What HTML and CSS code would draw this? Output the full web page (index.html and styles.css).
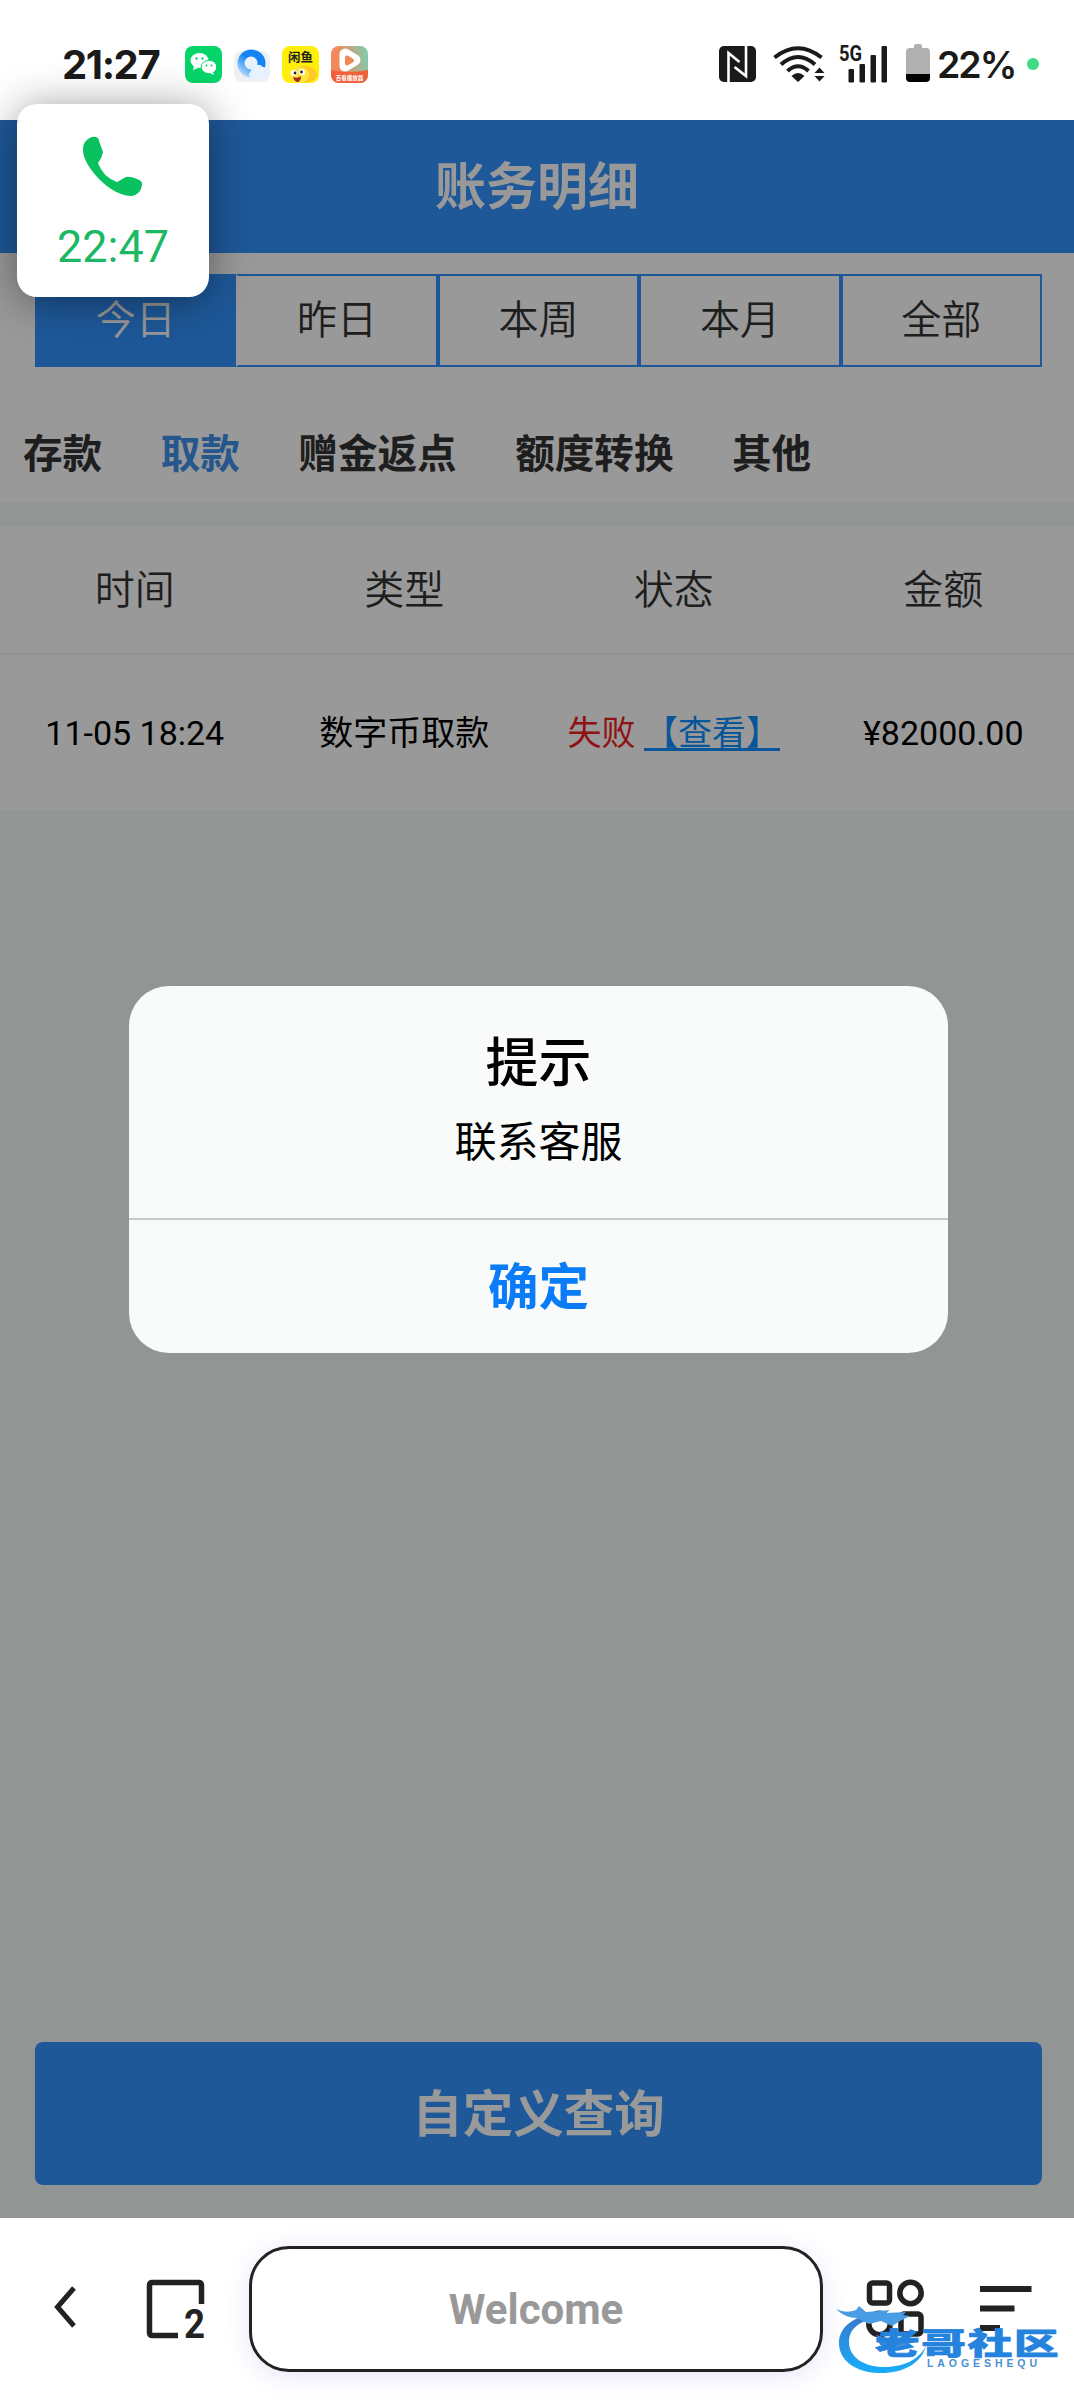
FILE: index.html
```html
<!DOCTYPE html>
<html lang="zh-CN">
<head>
    <meta charset="UTF-8">
    <meta name="viewport" content="width=device-width, initial-scale=1.0">
    <title>账务明细</title>
    <link rel="stylesheet" href="styles.css">
</head>
<body>
    <!-- Status bar -->
    <div class="status-bar">
        <span class="clock">21:27</span>
        <div class="app-icons">
            <svg width="37" height="37" viewBox="0 0 37 37">
                <rect width="37" height="37" rx="8" fill="#05d568"/>
                <ellipse cx="14.500" cy="14.500" rx="9" ry="7.500" fill="#fff"/>
                <path d="M9 20l-1 4 5-2z" fill="#fff"/>
                <circle cx="11.500" cy="12.500" r="1.200" fill="#05d568"/>
                <circle cx="17.500" cy="12.500" r="1.200" fill="#05d568"/>
                <ellipse cx="24" cy="21" rx="7.800" ry="6.800" fill="#fff" stroke="#05d568" stroke-width="1"/>
                <path d="M28 26l1 3-4-2z" fill="#fff"/>
                <circle cx="21.500" cy="19.500" r="1" fill="#05d568"/>
                <circle cx="26.500" cy="19.500" r="1" fill="#05d568"/>
            </svg>
            <svg width="37" height="37" viewBox="0 0 37 37">
                <defs>
                    <linearGradient id="ring" x1="0.800" y1="0.200" x2="0.200" y2="1">
                        <stop offset="0.350" stop-color="#1683f5"/>
                        <stop offset="1" stop-color="#c4e2fc"/>
                    </linearGradient>
                </defs>
                <rect y="5" width="36" height="31" rx="8" fill="#eef0f4"/>
                <circle cx="17.500" cy="17.500" r="14" fill="url(#ring)"/>
                <circle cx="17" cy="17" r="6.500" fill="#e9f2fc"/>
                <path d="M17 33a5 5 0 0 1 0-8 7 7 0 0 1 12-4c4 0 6 3 6 6s-2 6-6 6z" fill="#e6f2ff"/>
            </svg>
            <svg width="37" height="37" viewBox="0 0 37 37">
                <rect width="37" height="37" rx="8" fill="#ffee08"/>
                <ellipse cx="22" cy="28.500" rx="13" ry="8.500" fill="#ffc928"/>
                <ellipse cx="17" cy="29" rx="10" ry="8" fill="#ffe63d"/>
                <text class="fish-label" x="18.500" y="15.500" text-anchor="middle">闲鱼</text>
                <circle cx="12" cy="27" r="3" fill="#fff"/>
                <circle cx="20" cy="26" r="3" fill="#fff"/>
                <circle cx="13" cy="27" r="1.400" fill="#222"/>
                <circle cx="19.500" cy="26" r="1.400" fill="#222"/>
                <path d="M11 31q5 2 8-1 0 6-4 6-3-1-4-5z" fill="#a72a16"/>
            </svg>
            <svg width="37" height="37" viewBox="0 0 37 37">
                <defs>
                    <linearGradient id="play" x1="0" y1="0.300" x2="1" y2="0.100">
                        <stop offset="0.200" stop-color="#f08a5d"/>
                        <stop offset="1" stop-color="#7bd0b0"/>
                    </linearGradient>
                </defs>
                <rect width="37" height="37" rx="8" fill="url(#play)"/>
                <path d="M0 24q18 4 37 0v5a8 8 0 0 1-8 8H8a8 8 0 0 1-8-8z" fill="#f2603a"/>
                <path d="M14 8v12l10-6z" fill="#fff" stroke="#fff" stroke-width="11" stroke-linejoin="round"/>
                <path d="M16 11.500v6l5-3z" fill="#ef8a58" stroke="#ef8a58" stroke-width="4" stroke-linejoin="round"/>
                <text class="play-label" x="18.500" y="34" text-anchor="middle">百看播放器</text>
            </svg>
        </div>
        <div class="system-icons">
            <svg width="37" height="36" viewBox="0 0 37 36">
                <rect width="37" height="36" rx="5" fill="#1a1a1a"/>
                <path d="M9.500 36V7L20.500 16M27 0v30L15.500 21" fill="none" stroke="#fff" stroke-width="2.600"/>
            </svg>
            <svg class="wifi" width="52" height="36" viewBox="0 0 52 36">
                <g fill="none" stroke="#1a1a1a" stroke-width="4">
                    <path d="M1.500 11.500Q25 -7 48.500 11.500"/>
                    <path d="M8 18.500Q25 3.500 42 18.500"/>
                    <path d="M14.500 25Q25 15.500 35.500 25"/>
                </g>
                <path d="M18.500 30Q25 24 31.500 30L25 36z" fill="#1a1a1a"/>
                <path d="M41.500 27l5-5.500 5 5.500zM41.500 30h10l-5 5.500z" fill="#1a1a1a"/>
            </svg>
            <svg class="signal" width="49" height="46" viewBox="0 -4 49 46">
                <text class="network" x="0" y="16" textLength="23" lengthAdjust="spacingAndGlyphs">5G</text>
                <g fill="#1a1a1a">
                    <rect x="9.500" y="24" width="5.500" height="13.500" rx="1"/>
                    <rect x="20.500" y="19" width="5.500" height="18.500" rx="1"/>
                    <rect x="31.500" y="10" width="5.500" height="27.500" rx="1"/>
                    <rect x="42.500" y="1" width="5.500" height="36.500" rx="1"/>
                </g>
            </svg>
            <svg class="battery" width="24" height="38" viewBox="0 0 24 38">
                <path d="M8 4V2q0-2 2-2h4q2 0 2 2v2h4q4 0 4 4v22H0V8q0-4 4-4z" fill="#b0b0b0"/>
                <path d="M0 30h24v4q0 4-4 4H4q-4 0-4-4z" fill="#000"/>
            </svg>
            <span class="percent">22%</span>
            <span class="dot"></span>
        </div>
    </div>

    <!-- Page -->
    <main class="page">
        <header class="page-header">账务明细</header>

        <div class="top-panel">
            <div class="day-tabs">
                <div class="day-tab active">今日</div>
                <div class="day-tab">昨日</div>
                <div class="day-tab">本周</div>
                <div class="day-tab">本月</div>
                <div class="day-tab">全部</div>
            </div>
            <nav class="categories">
                <span>存款</span>
                <span class="active">取款</span>
                <span>赠金返点</span>
                <span>额度转换</span>
                <span>其他</span>
            </nav>
        </div>

        <div class="records">
            <div class="record-head">
                <span>时间</span>
                <span>类型</span>
                <span>状态</span>
                <span>金额</span>
            </div>
            <div class="record-row">
                <span>11-05 18:24</span>
                <span>数字币取款</span>
                <span><em>失败</em> <a href="#">【查看】</a></span>
                <span>¥82000.00</span>
            </div>
        </div>

        <button class="query-button">自定义查询</button>

        <!-- Dialog -->
        <div class="overlay">
            <div class="dialog">
                <div class="dialog-body">
                    <h2>提示</h2>
                    <p>联系客服</p>
                </div>
                <button class="dialog-ok">确定</button>
            </div>
        </div>
    </main>

    <!-- Browser toolbar -->
    <footer class="toolbar">
        <svg class="back" width="24" height="44" viewBox="0 0 24 44">
            <path d="M21 3L4.500 22l16.500 19" fill="none" stroke="#222" stroke-width="5"/>
        </svg>
        <svg class="windows" width="62" height="72" viewBox="0 -6 62 72">
            <path d="M32 56.500H6.500q-3 0-3-3V6.500q0-3 3-3h46q3 0 3 3V25" fill="none" stroke="#222" stroke-width="5.500"/>
            <text class="window-count" x="38" y="59" textLength="21" lengthAdjust="spacingAndGlyphs">2</text>
        </svg>
        <div class="address">Welcome</div>
        <svg class="apps" width="60" height="60" viewBox="0 0 60 60">
            <g fill="none" stroke="#222" stroke-width="5.500">
                <rect x="3.500" y="4" width="20" height="20" rx="3"/>
                <circle cx="44.500" cy="14" r="10.700"/>
                <circle cx="13.500" cy="45" r="10.700"/>
                <rect x="35" y="35" width="20" height="20" rx="3"/>
            </g>
        </svg>
        <svg class="menu" width="52" height="46" viewBox="0 0 52 46">
            <path d="M0 3h51.500M0 22.500h34.500M0 42h20" stroke="#222" stroke-width="6"/>
        </svg>
    </footer>

    <!-- Call bubble -->
    <div class="call-bubble">
        <svg width="62" height="60" viewBox="0 0 62 60">
            <path d="M3 6Q8 0 14 1q3 1 3 4l4 11q-1 6-5 11 5 14 19 19l9-5q4-1 11 2 6 2 5 6-1 9-10 11Q34 60 17 43 0 25 1 12q0-3 2-6z" fill="#0ac160"/>
        </svg>
        <span>22:47</span>
    </div>

    <!-- Community mark -->
    <svg class="community" width="226" height="74" viewBox="0 0 226 74">
        <defs>
            <linearGradient id="sea" x1="0" y1="0" x2="0" y2="1">
                <stop offset="0" stop-color="#3a76cb"/>
                <stop offset="1" stop-color="#18adf8"/>
            </linearGradient>
        </defs>
        <path d="M50 9C20 9 3 22 3 39c0 18 17 29 39 30 24 1 43-9 48-27-8 15-24 21-42 21-20 0-35-10-35-25C13 22 28 14 47 15z" fill="url(#sea)"/>
        <path d="M0 5q10 5 20 1l3-4 7 6 13-1 11-1-4 3 20-1-3 3 7 1-10 5-8 5-11-5-12 3-12-6q-12 0-21-9z" fill="#489de4"/>
        <path d="M40 31l12 3 7-4-2 6 24 2-27 5-10-2z" fill="#3386d5"/>
        <text class="community-name" transform="translate(39 49.500) scale(1.350 0.900)" textLength="136">老哥社区</text>
        <text class="community-latin" x="91" y="62.500" textLength="110">LAOGESHEQU</text>
    </svg>
</body>
</html>
```

FILE: styles.css
```css
* {
    margin: 0;
    padding: 0;
    box-sizing: border-box;
}

body {
    position: relative;
    width: 1074px;
    height: 2400px;
    overflow: hidden;
    font-family: Roboto, "Noto Sans CJK SC", sans-serif;
    background: #fff;
}

svg {
    display: block;
    flex-shrink: 0;
}

button {
    font-family: inherit;
    border: none;
}

/* Status bar */
.status-bar {
    height: 120px;
    padding: 8px 35px 0 62px;
    display: flex;
    align-items: center;
    color: #1a1a1a;
}

.clock {
    width: 123px;
    font-family: Inter, sans-serif;
    font-size: 40px;
    font-weight: 700;
    letter-spacing: -1.4px;
}

.app-icons {
    display: flex;
    gap: 11.700px;
    padding-top: 1px;
}

.fish-label {
    font-family: "Noto Sans CJK SC", sans-serif;
    font-size: 12.500px;
    font-weight: 700;
    fill: #222;
}

.play-label {
    font-family: "Noto Sans CJK SC", sans-serif;
    font-size: 5.500px;
    font-weight: 700;
    fill: #fff;
}

.system-icons {
    display: flex;
    align-items: center;
    margin-left: auto;
}

.wifi {
    margin-left: 17px;
}

.signal {
    margin-left: 14px;
}

.network {
    font-family: Roboto, sans-serif;
    font-size: 22px;
    font-weight: 700;
    fill: #1a1a1a;
}

.battery {
    margin: -3px 7px 0 18px;
}

.percent {
    width: 90px;
    font-family: Inter, sans-serif;
    font-size: 37.500px;
    font-weight: 600;
    letter-spacing: -2px;
}

.dot {
    width: 12px;
    height: 12px;
    border-radius: 50%;
    background: #3ddc84;
}

/* Page */
.page {
    position: relative;
    height: 2098px;
    display: flex;
    flex-direction: column;
    background: #f2f8f5;
}

.page-header {
    height: 133px;
    line-height: 135px;
    text-align: center;
    font-size: 51px;
    font-weight: 700;
    color: #fff;
    background: #3293ff;
}

.top-panel {
    height: 250px;
    padding-top: 21px;
    background: #fff;
}

.day-tabs {
    display: flex;
    height: 93px;
    margin: 0 32px 0 35px;
}

.day-tab {
    flex: 1;
    border: 2px solid #3293ff;
    line-height: 89px;
    text-align: center;
    font-size: 40px;
    font-weight: 350;
    color: #333;
}

.day-tab.active {
    color: #fff;
    background: #3293ff;
}

.day-tab.active + .day-tab {
    border-left-color: #fff;
}

.categories {
    display: flex;
    gap: 58.500px;
    padding: 58px 23px 0;
    line-height: 60px;
    font-size: 39.600px;
    font-weight: 700;
    color: #333;
}

.categories .active {
    color: #3f8fea;
}

/* Records */
.records {
    margin-top: 23px;
    background: #fff;
}

.record-head,
.record-row {
    display: grid;
    grid-template-columns: repeat(4, 269.500px);
    text-align: center;
    white-space: nowrap;
}

.record-head {
    height: 129px;
    line-height: 129px;
    border-bottom: 2px solid #f2f2f2;
    font-size: 40px;
    font-weight: 350;
    color: #333;
}

.record-row {
    height: 156px;
    line-height: 157px;
    font-size: 34px;
    font-weight: 400;
    color: #000;
}

.record-row em {
    font-style: normal;
    color: #f02020;
}

.record-row a {
    color: #0a90ff;
    text-decoration-thickness: 3px;
    text-underline-offset: 3px;
}

.query-button {
    height: 143px;
    margin: auto 32px 33px 35px;
    padding-bottom: 8px;
    border-radius: 8px;
    font-size: 50.500px;
    font-weight: 700;
    color: #fff;
    background: #3293ff;
}

/* Dialog */
.overlay {
    position: absolute;
    inset: 0;
    display: flex;
    align-items: center;
    justify-content: center;
    padding-left: 3px;
    background: rgba(0, 0, 0, 0.4);
}

.dialog {
    width: 819px;
    height: 367px;
    border-radius: 40px;
    overflow: hidden;
    text-align: center;
    background: #f9fbfa;
}

.dialog-body {
    height: 234px;
    padding-top: 39px;
    border-bottom: 2px solid #c6c9c8;
}

.dialog h2 {
    line-height: 78px;
    font-size: 53px;
    font-weight: 500;
}

.dialog p {
    line-height: 80px;
    font-size: 42px;
    color: #000;
}

.dialog-ok {
    width: 100%;
    height: 131px;
    padding-bottom: 4px;
    font-size: 50.500px;
    font-weight: 700;
    color: #0a7cf8;
    background: none;
}

/* Browser toolbar */
.toolbar {
    height: 182px;
    display: flex;
    align-items: center;
    padding: 0 42px 0 53px;
    background: #fff;
}

.back {
    margin-top: -4px;
}

.windows {
    margin-left: 69px;
}

.window-count {
    font-family: Roboto, sans-serif;
    font-size: 40px;
    font-weight: 700;
    fill: #222;
}

.address {
    width: 574px;
    height: 126px;
    margin-left: 41px;
    border: 3px solid #222;
    border-radius: 40px;
    line-height: 122px;
    text-align: center;
    font-size: 42px;
    font-weight: 700;
    color: #999;
    background: #fff;
    box-shadow: 0 4px 24px rgba(80, 80, 220, 0.14);
}

.apps {
    margin-left: 43px;
}

.menu {
    margin-left: auto;
}

/* Call bubble */
.call-bubble {
    position: absolute;
    left: 17px;
    top: 104px;
    width: 192px;
    height: 193px;
    padding-top: 32px;
    display: flex;
    flex-direction: column;
    align-items: center;
    gap: 24px;
    border-radius: 20px;
    font-size: 45px;
    line-height: 53px;
    color: #1bb866;
    background: #fff;
    box-shadow: 0 4px 44px rgba(0, 0, 0, 0.42);
}

/* Community mark */
.community {
    position: absolute;
    left: 836px;
    top: 2304px;
}

.community-name {
    font-family: "Noto Sans CJK SC", sans-serif;
    font-size: 33px;
    font-weight: 900;
    fill: #2583dd;
    stroke: #2583dd;
    stroke-width: 0.8px;
}

.community-latin {
    font-family: "Liberation Sans", sans-serif;
    font-size: 10.500px;
    font-weight: 700;
    fill: #4a8fd2;
}
```
